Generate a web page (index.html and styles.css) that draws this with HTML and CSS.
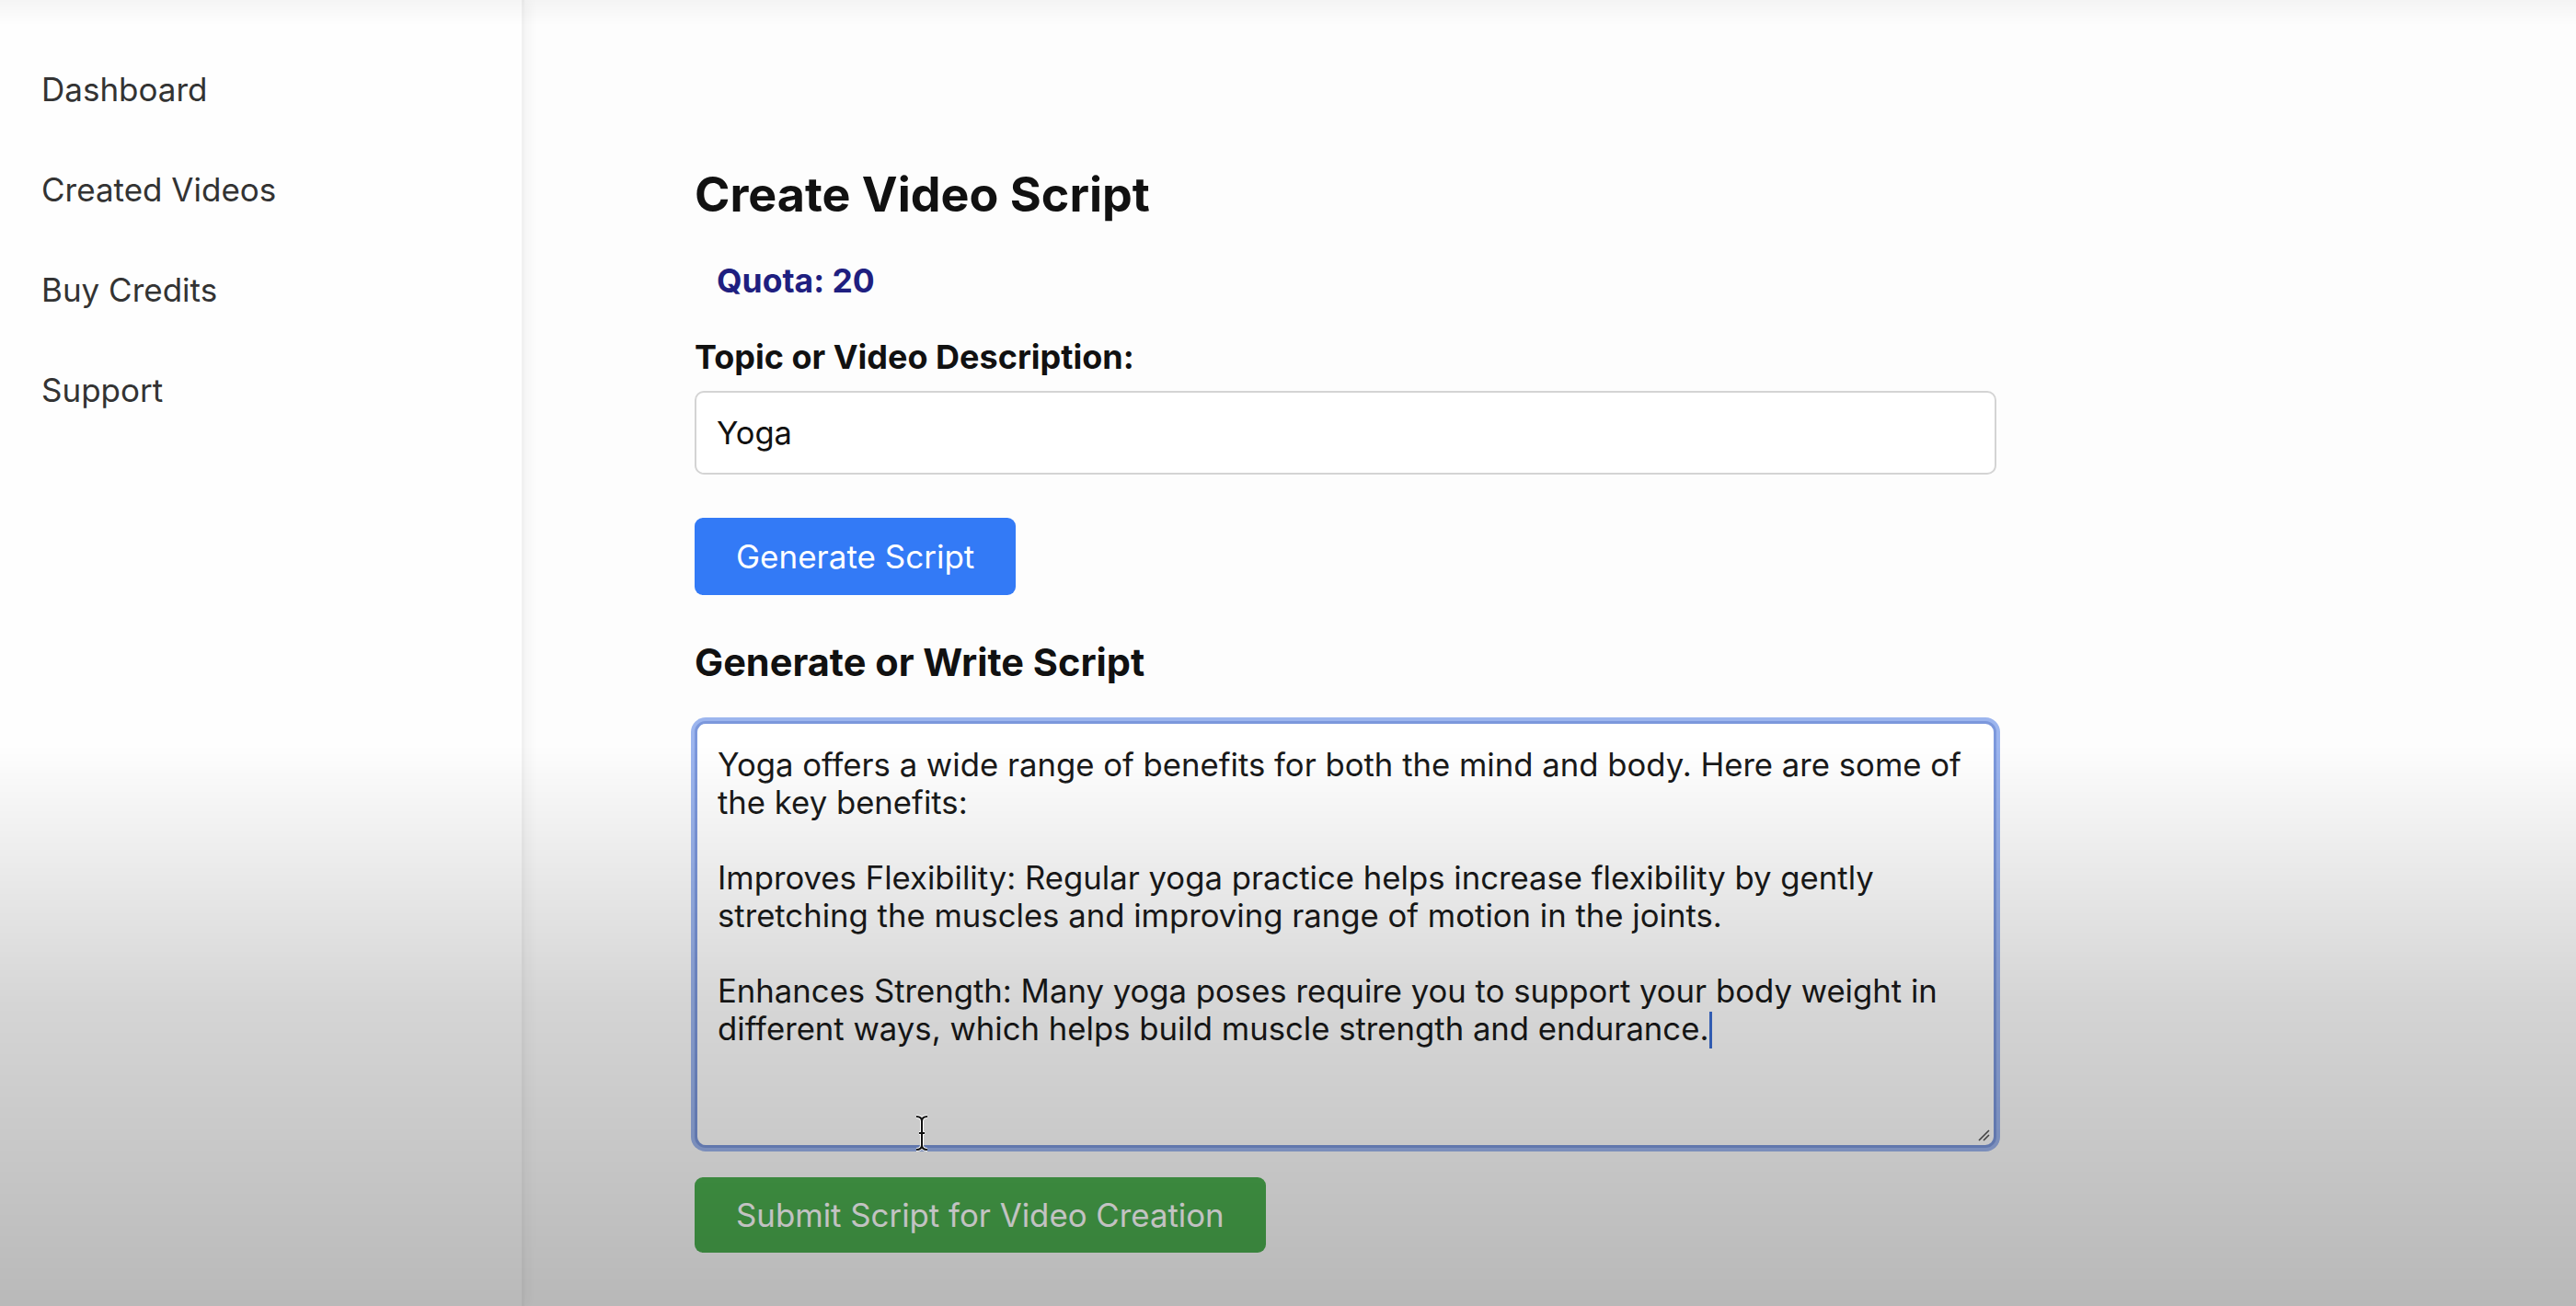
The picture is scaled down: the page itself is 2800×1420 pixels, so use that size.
FILE: index.html
```html
<!DOCTYPE html>
<html lang="en">
<head>
    <meta charset="UTF-8">
    <meta name="viewport" content="width=device-width, initial-scale=1.0">
    <title>Create Video Script</title>
    <link rel="stylesheet" href="styles.css">
</head>
<body>
    <div class="layout">
        <nav class="sidebar">
            <a class="nav-link" href="#">Dashboard</a>
            <a class="nav-link" href="#">Created Videos</a>
            <a class="nav-link" href="#">Buy Credits</a>
            <a class="nav-link" href="#">Support</a>
        </nav>

        <main class="content">
            <div class="form-wrap">
                <h2 class="page-title">Create Video Script</h2>
                <div class="quota">Quota: 20</div>

                <label class="field-label" for="topic">Topic or Video Description:</label>
                <input type="text" id="topic" class="topic-input" value="Yoga">

                <button class="btn btn-blue">Generate Script</button>

                <h3 class="section-title">Generate or Write Script</h3>
                <div class="script-box">
                    <div class="script-text">Yoga offers a wide range of benefits for both the mind and body. Here are some of
the key benefits:

Improves Flexibility: Regular yoga practice helps increase flexibility by gently
stretching the muscles and improving range of motion in the joints.

Enhances Strength: Many yoga poses require you to support your body weight in
different ways, which helps build muscle strength and endurance.<span class="caret"></span></div>
                    <svg class="resize-grip" viewBox="0 0 16 16" width="16" height="16">
                        <path d="M4 15 L15 4 M9 15 L15 9" stroke="#555" stroke-width="1.6" fill="none"/>
                    </svg>
                </div>

                <button class="btn btn-green">Submit Script for Video Creation</button>
            </div>
        </main>
    </div>

    <!-- the darker band at the bottom of the capture -->
    <div class="video-shade"></div>

    <svg class="mouse-cursor" viewBox="0 0 18 40" width="18" height="40">
        <path d="M3 2 Q9 2 9 7 Q9 2 15 2 M9 7 L9 33 M3 38 Q9 38 9 33 Q9 38 15 38 M6 20 L12 20" stroke="#fff" stroke-width="4" fill="none"/>
        <path d="M3 2 Q9 2 9 7 Q9 2 15 2 M9 7 L9 33 M3 38 Q9 38 9 33 Q9 38 15 38 M6 20 L12 20" stroke="#111" stroke-width="2" fill="none"/>
    </svg>
</body>
</html>
```

FILE: styles.css
```css
body {
    margin: 0;
    font-family: Inter, "Liberation Sans", Arial, sans-serif;
    background-color: #fdfdfd;
    color: #111;
}

.layout {
    display: flex;
    min-height: 1420px;
}

.sidebar {
    width: 570px;
    flex-shrink: 0;
    background: #fefefe;
    border-right: 3px solid #f1f1f1;
    box-shadow: 5px 0 12px rgba(0, 0, 0, 0.04);
    padding-top: 75px;
    padding-left: 45px;
    box-sizing: border-box;
    display: flex;
    flex-direction: column;
    gap: 65px;
}

.nav-link {
    font-size: 35px;
    line-height: 44px;
    color: #333;
    text-decoration: none;
}

.content {
    flex: 1;
    padding-left: 185px;
    padding-top: 182px;
}

.form-wrap {
    width: 1415px;
    display: flex;
    flex-direction: column;
    align-items: flex-start;
}

.page-title {
    margin: 0;
    font-size: 52px;
    line-height: 60px;
    font-weight: 700;
}

.quota {
    margin-top: 42px;
    padding-left: 24px;
    font-size: 35.5px;
    line-height: 44px;
    font-weight: 700;
    color: #1f1f80;
}

.field-label {
    margin-top: 38px;
    font-size: 36px;
    line-height: 44px;
    font-weight: 700;
}

.topic-input {
    margin-top: 15px;
    width: 100%;
    height: 91px;
    box-sizing: border-box;
    padding: 0 22px;
    border: 2px solid #d4d4d4;
    border-radius: 10px;
    background: #fff;
    font-family: inherit;
    font-size: 34.5px;
    color: #111;
    outline: none;
}

.btn {
    border: none;
    font-family: inherit;
    font-size: 35px;
    line-height: 44px;
    color: #fff;
    cursor: pointer;
}

.btn-blue {
    margin-top: 47px;
    height: 84px;
    padding: 0 45px;
    border-radius: 9px;
    background-color: #337af6;
}

.section-title {
    margin: 48px 0 0;
    font-size: 41.5px;
    line-height: 50px;
    font-weight: 700;
}

.script-box {
    position: relative;
    margin-top: 39px;
    width: 100%;
    height: 464px;
    box-sizing: border-box;
    border: 3px solid #7c98dc;
    border-radius: 12px;
    box-shadow: 0 0 0 4px #9cb5ee;
    background: #fff;
    padding: 24px 22px 22px;
}

.script-text {
    white-space: pre-wrap;
    font-size: 34.7px;
    line-height: 41px;
    color: #1a1a1a;
}

.caret {
    display: inline-block;
    width: 3px;
    height: 40px;
    margin-left: 1px;
    vertical-align: -9px;
    background: #3b6fd6;
}

.resize-grip {
    position: absolute;
    right: 4px;
    bottom: 4px;
}

.btn-green {
    margin-top: 32px;
    height: 82px;
    padding: 0 45px;
    border-radius: 9px;
    background-color: #4caf50;
    font-size: 34.8px;
}

.video-shade {
    position: fixed;
    inset: 0;
    pointer-events: none;
    background:
        linear-gradient(to bottom, rgba(0, 0, 0, 0.035) 0, rgba(0, 0, 0, 0) 28px),
        linear-gradient(to bottom, rgba(0, 0, 0, 0) 0%, rgba(0, 0, 0, 0) 57%, rgba(0, 0, 0, 0.16) 77%, rgba(0, 0, 0, 0.27) 100%);
}

.mouse-cursor {
    position: absolute;
    left: 993px;
    top: 1212px;
}
```
